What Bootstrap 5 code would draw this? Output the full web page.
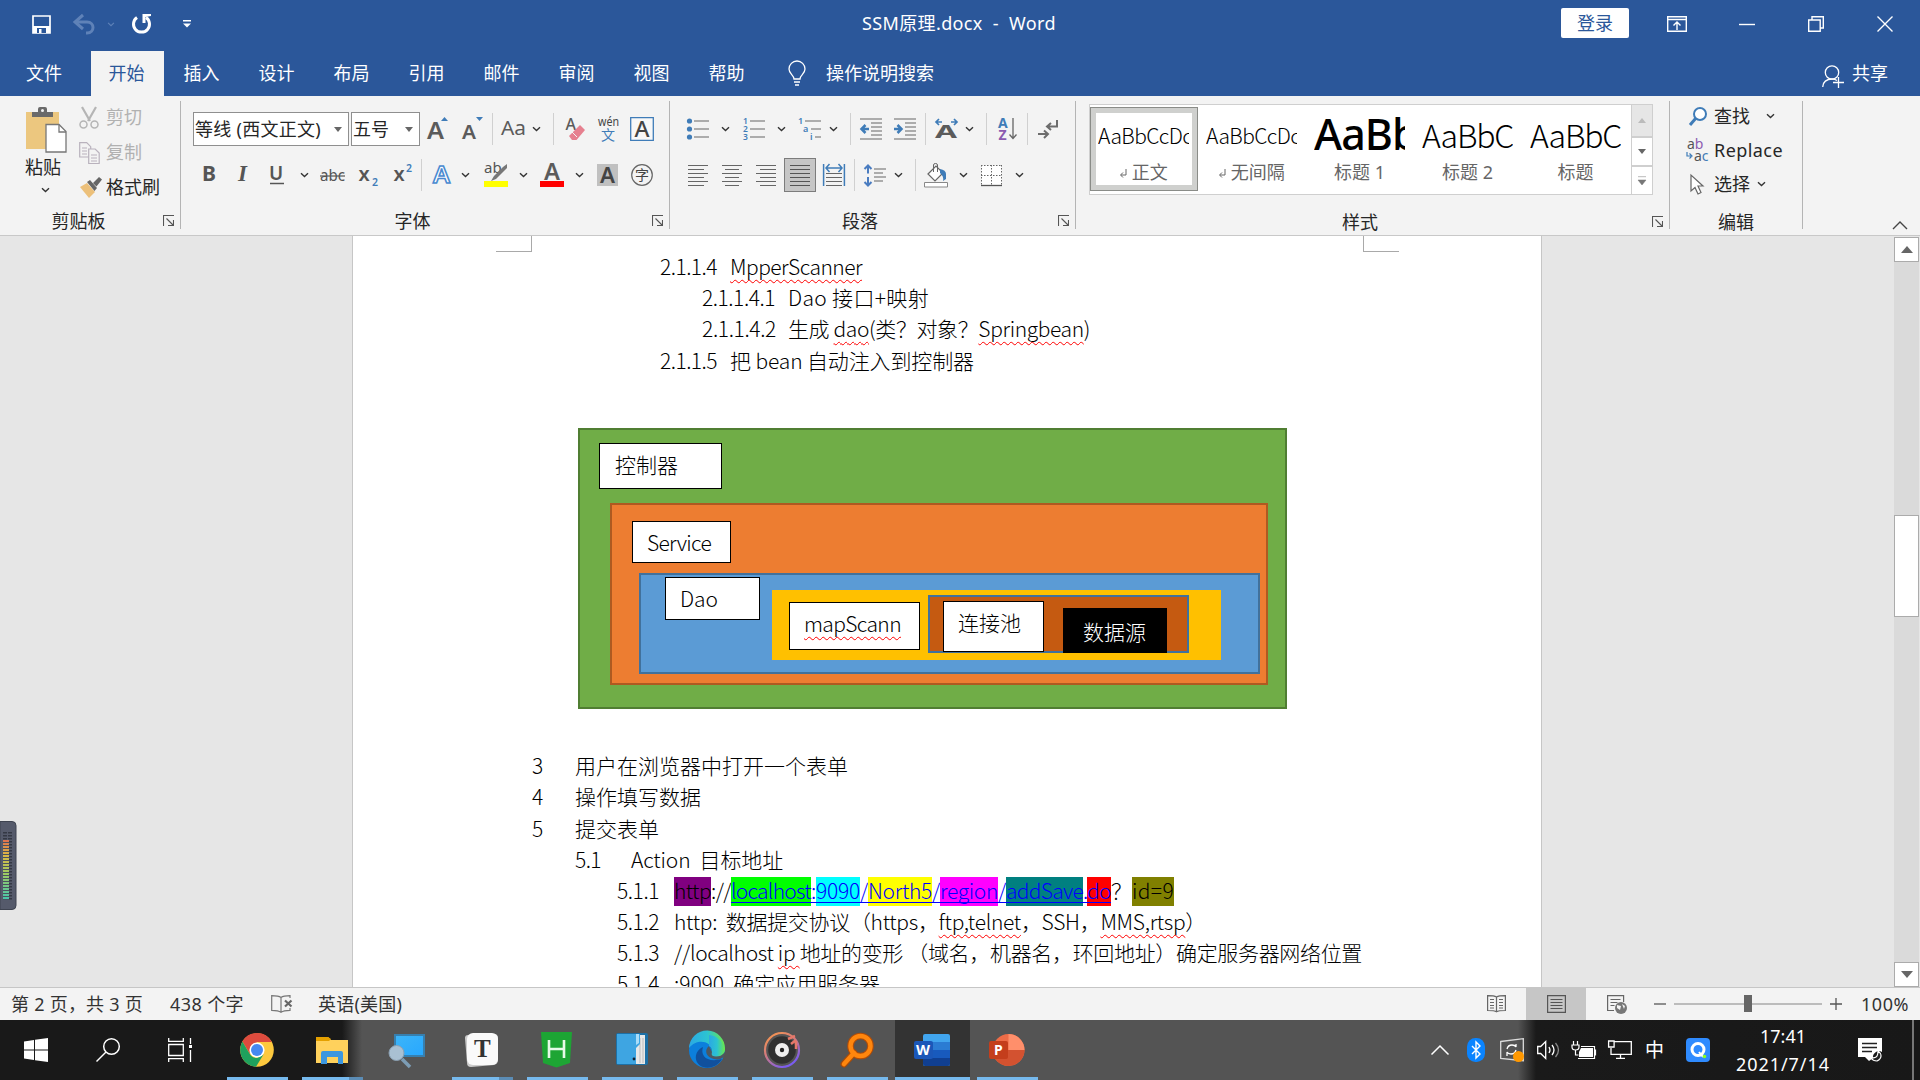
<!DOCTYPE html>
<html lang="zh-CN">
<head>
<meta charset="utf-8">
<title>SSM原理.docx - Word</title>
<link href="https://cdn.jsdelivr.net/npm/bootstrap@5.3.0/dist/css/bootstrap.min.css" rel="stylesheet">
<style>
:root{--word:#2b579a;--pane:#f3f3f3;--ink:#262626;--ico:#5b5b5b;--blu:#3f7cb8}
body{width:1920px;height:1080px;overflow:hidden;font:18px/1.4 "Noto Sans","Noto Sans CJK SC",sans-serif;color:var(--ink);background:#e6e6e6}
svg{display:block;overflow:visible;flex:none}
.nw{white-space:nowrap}
/* title bar and tabs */
.titlebar{height:51px;background:var(--word);color:#fff;padding-left:32px;flex:none}
.qat{width:830px;height:48px;display:grid;grid-template-columns:42px 33px 24px 52px 8px;align-items:center}
.doc-title{width:193px;height:48px;line-height:47px;letter-spacing:-.1px}
.sys{height:47px;display:grid;grid-template-columns:106px 72px 69px 69px 16px;align-items:center;margin-left:506px}
.login{width:68px;height:30px;background:#fff;color:var(--word);border-radius:2px;line-height:30px;text-align:center;margin-top:-1px}
.tabs{height:45px;background:var(--word);color:#fff;flex:none}
.tab{width:75px;text-align:center;line-height:44px}
.tab.file{width:91px;padding-right:3px}
.tab.on{width:73px;background:var(--pane);color:var(--word);padding-right:2px}
.tell{margin-left:24px;width:1034px}
.share-i{margin-top:14px}
/* ribbon */
.ribbon{height:140px;background:var(--pane);border-bottom:1px solid #c8c8c8;flex:none}
.grp{padding-top:13px;display:flex;flex-direction:column}
.vline{width:1px;height:128px;margin-top:5px;background:#b4b4b4;flex:none}
.grp>*{flex:none}
.rrow{height:40px;display:grid;align-items:center}
.rrow+.rrow{margin-top:6px}
.rrow+.gname{margin-top:12px}
.div32{width:1px;height:32px;background:#d0d0d0}
.gname{height:28px;margin-top:11px;padding-right:6px;line-height:28px;text-align:center}
.gname span{flex:1;padding-right:8px}
.clip-body+.gname span{padding-right:6px}
.g-clip{width:180px}.g-font{width:488px}.g-para{width:405px}.g-style{width:593px}.g-edit{width:132px}
.clip-body{height:87px}
.paste{width:79px;padding:0 0 0 26px;margin-top:-2px}
.paste-t{margin:2px 0 0 -1px;line-height:24px}
.paste-c{margin:8px 0 0 15px}
.clip-list{margin-top:-9px}
.clip-list div{height:35px;display:grid;grid-template-columns:27px auto;align-items:center;line-height:35px}
.off{color:#b1b1b1}
.f1{margin-left:12px;grid-template-columns:158px 77px 35px 29px 9px 31px 21px 13px 32px 32px 24px}
.f2{margin-left:22px;grid-template-columns:33px 34px 30px 20px 39px 35px 27px 12px 28px 23px 35px 21px 35px 22px 34px 22px}
.p1{margin-left:17px;grid-template-columns:34px 22px 34px 21px 31px 21px 10px 34px 31px 10px 30px 21px 12px 29px 11px 20px}
.p2{margin-left:18px;grid-template-columns:34px 34px 28px 39px 31px 10px 30px 21px 9px 35px 22px 34px 9px}
.combo{height:34px;background:#fff;border:1px solid #8f8f8f;display:flex;align-items:center;justify-content:space-between;padding:0 6px 0 1px;line-height:32px}
.c-face{width:156px}.c-size{width:69px}
.pressed{width:32px;height:34px;background:#c6c6c6;border:1px solid #7c7c7c;display:flex;align-items:center;justify-content:center}
.gallery{width:564px;height:91px;margin:-5px 0 0 13px;background:#fff;border:1px solid #cfcfcf}
.sty{width:108px;height:84px;margin-top:2px;padding:6px 0 0 8px;color:#666}
.sty.sel{border:1px solid #8a8c88;box-shadow:inset 0 0 0 5px #cfd0ce;padding:5px 0 0 7px}
.sty .smp{width:91px;height:47px;overflow:hidden;color:#000;white-space:nowrap;font-family:"Noto Sans CJK SC",sans-serif;font-weight:300;font-size:21px;line-height:44px;letter-spacing:-.6px}
.sty .smp.h1s{font-family:"Noto Sans",sans-serif;font-size:43px;font-weight:500;letter-spacing:-1px;line-height:42px}
.sty .smp.h2s{font-size:32px;font-weight:300;letter-spacing:-1.2px;line-height:42px}
.sty .cap{width:91px;text-align:center;line-height:25px}
.gbtns{width:22px;margin-left:auto;height:91px;margin-top:-1px;margin-right:-1px}
.gbtns div{height:29px;border:1px solid #cfcfcf;display:flex;align-items:center;justify-content:center;flex:none}
.gbtns div:first-child{height:33px;background:#e6e6e6}
.gallery+.gname{margin-top:13px}
.edit-list{padding-left:15px;height:91px;margin-top:-10px}
.edit-list div{height:34px;display:flex;align-items:center;line-height:34px;flex:none}
.edit-list .lab{width:67px}
.lab.s1{width:52px}.lab.s2{width:43px}
.edit-list .icw{width:29px}
.edit-list+.gname{margin-top:18px;padding:0}
.edit-list+.gname span{padding:0}
.collapse-c{margin:125px 0 0 89px}
/* document */
.work{height:751px;overflow:hidden;flex:none;position:relative}
.page{width:1190px;margin-left:352px;background:#fff;border:solid #c6c6c6;border-width:0 1px;position:relative;font-family:"Noto Sans CJK SC",sans-serif;font-size:21px;font-weight:300;color:#000;padding-top:15px}
.corner{position:absolute;top:0;width:36px;height:16px;border:solid #a9a9a9;border-width:0 1px 1px 0}
.corner.l{left:143px}.corner.r{left:1010px;border-width:0 0 1px 1px}
.ln{height:31.2px;line-height:31.2px;display:flex;white-space:pre}
.n{flex:none}
.a1{padding-left:307px}.a1 .n{width:70px}
.a2{padding-left:349px}.a2 .n{width:86px}
.b0{padding-left:179px}.b0 .n{width:43px}
.b1{padding-left:222px}.b1 .n{width:56px}
.b2{padding-left:264px}.b2 .n{width:57px}
.sq{text-decoration:underline wavy #f00 1.3px;text-underline-offset:4px;text-decoration-skip-ink:none}
.run{display:block;flex:none;height:29px;margin-top:2px;line-height:27px}
.lk{color:#00f;position:relative}
.lk::after{content:"";position:absolute;left:0;right:0;bottom:3px;height:1px;background:#00f}
.k1{background:#800080}.k2{background:#0f0}.k3{background:#0ff}.k4{background:#ff0}.k5{background:#f0f}.k6{background:#008080}.k7{background:red}.k8{background:#808000}
.canvas-d{height:374.4px;position:relative}
.bx{position:absolute;border:2px solid}
.tb{position:absolute;background:#fff;border:1.5px solid #000;white-space:nowrap;line-height:26px}
.d1{left:225px;top:52px;width:709px;height:281px;background:#70ad47;border-color:#507e32}
.d2{left:257px;top:127px;width:658px;height:182px;background:#ed7d31;border-color:#ae5a21}
.d3{left:286px;top:197px;width:621px;height:101px;background:#5b9bd5;border-color:#41719c}
.d4{left:419px;top:214px;width:449px;height:70px;background:#ffc000;border-color:#ffc000}
.d5{left:575px;top:219px;width:261px;height:58px;background:#c55a11;border-color:#41719c}
.t1{left:246px;top:67px;width:123px;height:46px;padding:7px 0 0 15px}
.t2{left:279px;top:145px;width:99px;height:42px;padding:7px 0 0 14px}
.t3{left:312px;top:201px;width:95px;height:43px;padding:7px 0 0 14px}
.t4{left:436px;top:226px;width:131px;height:48px;padding:7px 0 0 14px}
.t5{left:590px;top:225px;width:101px;height:51px;padding:7px 0 0 14px}
.t6{left:710px;top:232px;width:104px;height:45px;padding:9px 0 0 19px;background:#000;color:#fff}
.sbar{position:absolute;right:1px;top:1px;width:25px;height:750px;background:#dadada}
.sbar div{border:1px solid #ababab;background:#fff;height:25px;display:flex;align-items:center;justify-content:center;flex:none}
.sbar .thumb{height:102px;margin:253px 0 auto}
.meter{position:absolute;left:0;top:585px}
/* status bar */
.status{height:33px;background:var(--pane);border-top:1px solid #c6c6c6;flex:none;display:grid;grid-template-columns:159px 101px 47px 1169px 39px 60px 68px 20px 156px 31px auto;align-items:center;padding-left:11px;color:#333;line-height:32px}
.viewon{width:60px;height:32px;background:#c6c6c6;padding:7px 0 0 21px}
.webv{margin-left:21px}
/* taskbar */
.task{height:60px;flex:none;color:#fff;background:linear-gradient(90deg,#191919 0,#191919 342px,#545454 362px,#545454 1518px,#1a1a1a 1536px,#181818 100%)}
.sysb{width:72px;height:60px;display:flex;align-items:center;justify-content:center}
.app{width:75px;height:60px;display:flex;flex-direction:column;align-items:center;justify-content:space-between;padding-top:12px}
.app svg{margin-left:-2px}
.app .bar{width:61px;height:3px;background:#76b9ed}
.app .bar.multi{background:linear-gradient(90deg,#76b9ed 47px,#5b8cb5 47px)}
.app.act{background:#333}
.app.act .bar{width:75px}
.tray{display:grid;grid-template-columns:36px 33px 37px 35px 36px 38px 40px 43px 129px 54px 3px;align-items:center;margin-left:386px}
.clock{text-align:center;line-height:28px;width:108px;letter-spacing:-.1px}
.ime{font-size:19px;line-height:24px;margin-left:-1px}
.peek{width:2px;height:60px;background:#777}
</style>
</head>
<body class="d-flex flex-column">
<svg width="0" height="0" class="position-absolute"><defs>
<symbol id="cv" viewBox="0 0 9 6"><path d="M1 1.2 4.5 4.5 8 1.2" fill="none" stroke="#333" stroke-width="1.4"/></symbol>
<symbol id="tri" viewBox="0 0 8 5"><path d="M0 0h8L4 5z" fill="#666"/></symbol>
<symbol id="la" viewBox="0 0 11 11"><path d="M.5 11V.5H11M3.5 3.5 10 10M10.5 5v5.5H5" fill="none" stroke="#555" stroke-width="1.1"/></symbol>
</defs></svg>

<header class="titlebar d-flex align-items-start">
  <div class="qat">
    <svg width="19" height="19" viewBox="0 0 19 19"><path d="M1 1h17v17H1z" fill="none" stroke="#fff" stroke-width="1.7"/><path d="M1 11h17v7H1z" fill="#fff"/><path d="M5 13h9v5H5z" fill="#2b579a"/><path d="M7 14h2.500v4H7z" fill="#fff"/></svg>
    <svg width="21" height="19" viewBox="0 0 21 19"><path d="M2 7h11c8 0 8 11 0 11h-1" fill="none" stroke="#5f82b8" stroke-width="3"/><path d="M9 0 1 7l8 7" fill="none" stroke="#5f82b8" stroke-width="3"/></svg>
    <svg width="8" height="5" viewBox="0 0 9 6"><path d="M1 1l3.500 3.500L8 1" fill="none" stroke="#5f82b8" stroke-width="1.300"/></svg>
    <svg width="21" height="20" viewBox="0 0 21 20"><path d="M6 3.500A8 8 0 1 0 15 3.500" fill="none" stroke="#fff" stroke-width="3"/><path d="M11.500 0H20v2l-5.500 1v6h-3z" fill="#fff"/></svg>
    <svg width="8" height="8" viewBox="0 0 8 8"><path d="M0 0h8v1.500H0zM0 3.500h8L4 7.500z" fill="#fff"/></svg>
  </div>
  <div class="doc-title nw text-center"><span data-w="194">SSM原理.docx&nbsp; -&nbsp; Word</span></div>
  <div class="sys">
    <div class="login">登录</div>
    <svg width="20" height="16" viewBox="0 0 20 16"><path d="M.7.700h18.600v14.600H.7zM.7 3.500h18.600M10 14V6M6.500 9.500 10 6l3.500 3.500" fill="none" stroke="#fff" stroke-width="1.400"/></svg>
    <svg width="16" height="16" viewBox="0 0 16 16"><path d="M0 8.500h16" stroke="#fff" stroke-width="1.400"/></svg>
    <svg width="16" height="16" viewBox="0 0 16 16"><path d="M.7 4h11.500v11.300H.7zM4 4V.7h11.300V12h-3" fill="none" stroke="#fff" stroke-width="1.400"/></svg>
    <svg width="16" height="16" viewBox="0 0 16 16"><path d="M.5.500l15 15M15.500.500l-15 15" stroke="#fff" stroke-width="1.400"/></svg>
  </div>
</header>
<nav class="tabs d-flex">
  <div class="tab file">文件</div><div class="tab on">开始</div><div class="tab">插入</div><div class="tab">设计</div><div class="tab">布局</div><div class="tab">引用</div><div class="tab">邮件</div><div class="tab">审阅</div><div class="tab">视图</div><div class="tab">帮助</div>
  <div class="tell d-flex align-items-center"><svg width="18" height="24" viewBox="0 0 18 24"><path d="M6 17c0-4-5-5-5-10a8 8 0 0 1 16 0c0 5-5 6-5 10zM6 20h6M7 23h4" fill="none" stroke="#fff" stroke-width="1.300"/></svg><span class="ms-3 ps-1 nw">操作说明搜索</span></div>
  <svg class="share-i" width="22" height="23" viewBox="0 0 22 23"><circle cx="10" cy="7.500" r="6.700" fill="none" stroke="#fff" stroke-width="1.300"/><path d="M.7 22c0-5 4-8 9.300-8q3 0 5 1.500M16.500 12v11M11 17.500h11" fill="none" stroke="#fff" stroke-width="1.300"/></svg>
  <span class="nw ps-2 lh-lg mt-1">共享</span>
</nav>

<section class="ribbon d-flex">
  <div class="grp g-clip">
    <div class="clip-body d-flex">
      <div class="paste">
        <svg width="41" height="46" viewBox="0 0 41 46"><path d="M0 5h33v37H0z" fill="#ecc77f"/><path d="M6 10V5h6V2q0-2 2-2h5q2 0 2 2v3h6v5z" fill="#6a6a6a"/><circle cx="16.500" cy="3.500" r="1.500" fill="#f3f3f3"/><path d="M20 17.500h13l7 7V45H20z" fill="#fff" stroke="#777" stroke-width="1.300"/><path d="M33 17.500V25h7" fill="none" stroke="#777" stroke-width="1.300"/></svg>
        <div class="paste-t nw">粘贴</div>
        <svg class="paste-c" width="9" height="6"><use href="#cv"/></svg>
      </div>
      <div class="clip-list">
        <div class="off"><svg width="20" height="22" viewBox="0 0 20 22"><path d="M3 0l8 14M17 0 9 14" stroke="#b5b5b5" stroke-width="2.200"/><circle cx="4.500" cy="17.500" r="3.500" fill="none" stroke="#b5b5b5" stroke-width="1.500"/><circle cx="15.500" cy="17.500" r="3.500" fill="none" stroke="#b5b5b5" stroke-width="1.500"/></svg>剪切</div>
        <div class="off"><svg width="21" height="22" viewBox="0 0 21 22"><path d="M.7.700h7l4 4V15H.7zM3 6h5M3 9h5M3 12h5" fill="none" stroke="#b9b2bd" stroke-width="1.200"/><path d="M9.700 7h6.500l4 4v10.500H9.700zM12 13h6M12 16h6M12 19h6" fill="#f3f3f3" stroke="#b9b2bd" stroke-width="1.200"/></svg>复制</div>
        <div><svg width="23" height="21" viewBox="0 0 23 21"><path d="M1 10l7-4 8 9-6 6z" fill="#ecc07a"/><path d="M8 5l3-2 7 8-2.500 3zM14 6l6-6 3 2.500-5.500 7z" fill="#666"/></svg>格式刷</div>
      </div>
    </div>
    <div class="gname d-flex"><span>剪贴板</span><svg width="11" height="11" class="mt-2"><use href="#la"/></svg></div>
  </div>
  <div class="vline"></div>
  <div class="grp g-font">
    <div class="rrow f1">
      <div class="combo c-face nw"><span data-w="126">等线 (西文正文)</span><svg width="8" height="5"><use href="#tri"/></svg></div>
      <div class="combo c-size nw">五号<svg width="8" height="5"><use href="#tri"/></svg></div>
      <svg width="20" height="24" viewBox="0 0 20 24"><text x="-1" y="22" font-size="24" font-weight="600" fill="#5b5b5b" textLength="17" lengthAdjust="spacingAndGlyphs">A</text><path d="M13 4l3.500-4L20 4z" fill="#3f7cb8"/></svg>
      <svg width="20" height="24" viewBox="0 0 20 24"><text x="-1" y="22" font-size="20" font-weight="600" fill="#5b5b5b" textLength="14" lengthAdjust="spacingAndGlyphs">A</text><path d="M13 0h7l-3.500 4z" fill="#3f7cb8"/></svg>
      <div class="div32"></div>
      <svg width="25" height="24" viewBox="0 0 25 24"><text x="0" y="18" font-size="20" fill="#5b5b5b" textLength="25" lengthAdjust="spacingAndGlyphs">Aa</text></svg>
      <svg width="9" height="6"><use href="#cv"/></svg>
      <div class="div32"></div>
      <svg width="20" height="23" viewBox="0 0 20 23"><text x="-.5" y="12" font-size="16" fill="#5b5b5b" font-weight="500">A</text><path d="M14 7l5 5-8.500 10H6l-3-4z" fill="#e6808f"/><path d="M6 14l5 5" stroke="#f3f3f3"/></svg>
      <svg width="21" height="24" viewBox="0 0 21 24"><text x="0" y="9" font-size="13" fill="#444" textLength="21" lengthAdjust="spacingAndGlyphs">wén</text><text x="3" y="23" font-size="14" fill="#3f7cb8">文</text></svg>
      <svg width="24" height="24" viewBox="0 0 24 24"><path d="M.7.700h22.600v22.600H.7z" fill="#f8f8f8" stroke="#3f7cb8" stroke-width="1.300"/><text x="4.500" y="20" font-size="22" fill="#444" font-weight="500" textLength="15" lengthAdjust="spacingAndGlyphs">A</text></svg>
    </div>
    <div class="rrow f2">
      <svg width="13" height="24"><text x="-1" y="18" font-size="21" font-weight="700" fill="#555">B</text></svg>
      <svg width="13" height="24"><text x="2" y="18" font-size="23" font-style="italic" font-weight="600" font-family="Liberation Serif" fill="#555">I</text></svg>
      <svg width="14" height="24"><text x="-1" y="17" font-size="19" font-weight="600" fill="#555">U</text><path d="M0 20.500h14" stroke="#555" stroke-width="1.500"/></svg>
      <svg width="9" height="6"><use href="#cv"/></svg>
      <svg width="26" height="24"><text x="0" y="18" font-size="16" fill="#555" textLength="25" lengthAdjust="spacingAndGlyphs">abc</text><path d="M0 13h25" stroke="#555" stroke-width="1.200"/></svg>
      <svg width="20" height="24"><text x="-.5" y="18" font-size="20" font-weight="600" fill="#555">x</text><text x="13" y="23" font-size="10.500" font-weight="600" fill="#3f7cb8">2</text></svg>
      <svg width="20" height="24"><text x="-.5" y="18" font-size="20" font-weight="600" fill="#555">x</text><text x="12" y="9" font-size="10.500" font-weight="600" fill="#3f7cb8">2</text></svg>
      <div class="div32"></div>
      <svg width="18" height="24"><text x="0" y="20" font-size="24" fill="#fff" stroke="#4a8ad0" stroke-width="1.500" font-weight="600" textLength="17" lengthAdjust="spacingAndGlyphs">A</text></svg>
      <svg width="9" height="6"><use href="#cv"/></svg>
      <svg width="24" height="26"><path d="M0 19h24v6H0z" fill="#ff0"/><text x="0" y="11" font-size="15" fill="#555">ab</text><path d="M19 5l4-3v4L12 17l-5 2 3-5z" fill="#777"/></svg>
      <svg width="9" height="6"><use href="#cv"/></svg>
      <svg width="24" height="26"><path d="M0 19h24v6H0z" fill="red"/><text x="4" y="18" font-size="23" font-weight="600" fill="#5b5b5b" textLength="16" lengthAdjust="spacingAndGlyphs">A</text></svg>
      <svg width="9" height="6"><use href="#cv"/></svg>
      <svg width="21" height="22"><path d="M0 0h21v22H0z" fill="#c0c0c0"/><text x="3" y="19" font-size="22" font-weight="600" fill="#444" textLength="15" lengthAdjust="spacingAndGlyphs">A</text></svg>
      <svg width="22" height="22"><circle cx="11" cy="11" r="10.300" fill="none" stroke="#666" stroke-width="1.200"/><text x="4" y="16" font-size="14" fill="#444">字</text></svg>
    </div>
    <div class="gname d-flex"><span>字体</span><svg width="11" height="11" class="mt-2"><use href="#la"/></svg></div>
  </div>
  <div class="vline"></div>
  <div class="grp g-para">
    <div class="rrow p1">
      <svg width="22" height="22"><g fill="#3f7cb8"><circle cx="2.500" cy="3" r="2.600"/><circle cx="2.500" cy="11" r="2.600"/><circle cx="2.500" cy="19" r="2.600"/></g><path d="M7 3h15M7 11h15M7 19h15" stroke="#666" stroke-width="1.200"/></svg>
      <svg width="9" height="6"><use href="#cv"/></svg>
      <svg width="22" height="22"><g font-size="8.500" font-weight="600" fill="#3f7cb8"><text y="6">1</text><text y="14">2</text><text y="22">3</text></g><path d="M7 3h15M7 11h15M7 19h15" stroke="#666" stroke-width="1.200"/></svg>
      <svg width="9" height="6"><use href="#cv"/></svg>
      <svg width="23" height="22"><g font-size="9" font-weight="600" fill="#3f7cb8"><text y="6">1</text><text x="5" y="13.500">a</text><text x="12" y="22">i</text></g><path d="M7 3h16M13 11h10M17 19h6" stroke="#666" stroke-width="1.200"/></svg>
      <svg width="9" height="6"><use href="#cv"/></svg>
      <div class="div32"></div>
      <svg width="22" height="22"><path d="M0 1h22M11 5h11M11 9h11M11 13h11M11 17h11M0 21h22" stroke="#666" stroke-width="1.200"/><path d="M9 11H2M5.500 7 1.500 11l4 4" stroke="#3f7cb8" stroke-width="2.500" fill="none"/></svg>
      <svg width="22" height="22"><path d="M0 1h22M11 5h11M11 9h11M11 13h11M11 17h11M0 21h22" stroke="#666" stroke-width="1.200"/><path d="M0 11h7M3.500 7l4 4-4 4" stroke="#3f7cb8" stroke-width="2.500" fill="none"/></svg>
      <div class="div32"></div>
      <svg width="23" height="20"><text x="0" y="19" font-size="17" font-weight="700" fill="#5b5b5b" textLength="22" lengthAdjust="spacingAndGlyphs">A</text><path d="M7 3H1M4 0 1 3l3 3M16 3h6M19 0l3 3-3 3" stroke="#3f7cb8" stroke-width="1.700" fill="none"/></svg>
      <svg width="9" height="6"><use href="#cv"/></svg>
      <div class="div32"></div>
      <svg width="19" height="24"><text x="0" y="11" font-size="14" font-weight="700" fill="#3f7cb8">A</text><text x="0.500" y="23" font-size="14" font-weight="700" fill="#8b5bb0">Z</text><path d="M15 1v20M11.500 17.500 15 21.500l3.500-4" stroke="#666" stroke-width="1.300" fill="none"/></svg>
      <div class="div32"></div>
      <svg width="20" height="19"><path d="M19 0v6.500h-9M13 3l-4 3.500 4 3.500M0 14h9M6 10.500l4 3.500-4 4" stroke="#6c6c6c" stroke-width="2" fill="none"/></svg>
    </div>
    <div class="rrow p2">
      <svg width="20" height="21"><path d="M0 .5h20M0 4.500h16M0 8.500h20M0 12.500h16M0 16.500h20M0 20.500h16" stroke="#666" stroke-width="1.200"/></svg>
      <svg width="20" height="21"><path d="M0 .5h20M3 4.500h14M0 8.500h20M3 12.500h14M0 16.500h20M3 20.500h14" stroke="#666" stroke-width="1.200"/></svg>
      <svg width="20" height="21"><path d="M0 .5h20M4 4.500h16M0 8.500h20M4 12.500h16M0 16.500h20M4 20.500h16" stroke="#666" stroke-width="1.200"/></svg>
      <div class="pressed"><svg width="20" height="21"><path d="M0 .5h20M0 4.500h20M0 8.500h20M0 12.500h20M0 16.500h20M0 20.500h20" stroke="#555" stroke-width="1.200"/></svg></div>
      <svg width="22" height="22"><path d="M.6 0v22M21.400 0v22M3 4h16M6.500 0 3 4l3.500 4M15.500 0 19 4l-3.500 4" stroke="#3f7cb8" stroke-width="1.500" fill="none"/><path d="M3 9.500h16M3 13.500h16M3 17.500h16M3 21.500h16" stroke="#666" stroke-width="1.200"/></svg>
      <div class="div32"></div>
      <svg width="22" height="23"><path d="M4 1v8.500M.5 5 4 1.500 7.500 5M4 13v8.500M.5 18 4 21.500 7.500 18" stroke="#4a7cc0" stroke-width="2" fill="none"/><path d="M10 5h12M10 9h9M10 13h12M10 17h9" stroke="#666" stroke-width="1.200"/></svg>
      <svg width="9" height="6"><use href="#cv"/></svg>
      <div class="div32"></div>
      <svg width="24" height="25"><path d="M.5 19.500h23v4.500H.5z" fill="#fff" stroke="#888"/><path d="M4 11l8-8 7 7-8 8z" fill="#fff" stroke="#666" stroke-width="1.200"/><path d="M9.500 9V2q0-1.500 2-1.500t2 1.500v7" fill="none" stroke="#666"/><path d="M16 6q6 1 6 5v5l-3 2q1-5-3-8z" fill="#3f7cb8"/></svg>
      <svg width="9" height="6"><use href="#cv"/></svg>
      <svg width="21" height="21"><path d="M.5.500h20v20H.5z" fill="#fff"/><path d="M0 .5h21M0 10.500h21M.5 0v21M10.500 0v21M20.500 0v21" stroke="#666" stroke-dasharray="1.500 1.500"/><path d="M0 20.500h21" stroke="#555" stroke-width="1.300"/></svg>
      <svg width="9" height="6"><use href="#cv"/></svg>
    </div>
    <div class="gname d-flex"><span>段落</span><svg width="11" height="11" class="mt-2"><use href="#la"/></svg></div>
  </div>
  <div class="vline"></div>
  <div class="grp g-style">
    <div class="gallery d-flex">
      <div class="sty sel"><div class="smp">AaBbCcDc</div><div class="cap"><svg class="d-inline" width="8" height="10"><path d="M7 0v6H2M4 3.500 1.500 6 4 8.500" fill="none" stroke="#666"/></svg> 正文</div></div>
      <div class="sty"><div class="smp">AaBbCcDc</div><div class="cap"><svg class="d-inline" width="8" height="10"><path d="M7 0v6H2M4 3.500 1.500 6 4 8.500" fill="none" stroke="#666"/></svg> 无间隔</div></div>
      <div class="sty"><div class="smp h1s">AaBb</div><div class="cap">标题 1</div></div>
      <div class="sty"><div class="smp h2s">AaBbC</div><div class="cap">标题 2</div></div>
      <div class="sty"><div class="smp h2s">AaBbC</div><div class="cap">标题</div></div>
      <div class="gbtns"><div><svg width="8" height="5"><path d="M0 5h8L4 0z" fill="#bbb"/></svg></div><div><svg width="8" height="5"><use href="#tri"/></svg></div><div><svg width="8" height="9"><path d="M0 .7h8M0 4h8L4 9z" fill="#777" stroke="#777" stroke-width=".5"/></svg></div></div>
    </div>
    <div class="gname d-flex"><span>样式</span><svg width="11" height="11" class="mt-2"><use href="#la"/></svg></div>
  </div>
  <div class="vline"></div>
  <div class="grp g-edit">
    <div class="edit-list">
      <div><span class="icw ps-1"><svg width="18" height="19"><circle cx="11" cy="7" r="6" fill="#fff" stroke="#3f7cb8" stroke-width="2"/><path d="M7 11 1 18" stroke="#3f7cb8" stroke-width="3"/></svg></span><span class="lab s1">查找</span><svg width="9" height="6"><use href="#cv"/></svg></div>
      <div><span class="icw"><svg width="22" height="23"><text x="2" y="10" font-size="14" fill="#555">a<tspan fill="#8b5bb0">b</tspan></text><text x="9" y="22" font-size="14" fill="#555">a<tspan fill="#3f7cb8">c</tspan></text><path d="M2 13v4h4M4.500 14.500 7 17l-2.500 2.500" fill="none" stroke="#3f7cb8" stroke-width="1.200"/></svg></span><span class="lab"><span data-w="69">Replace</span></span></div>
      <div><span class="icw ps-1"><svg width="13" height="21"><path d="M2 1v16l4-3.500L9 20l3-1.500-3-6.500h5z" fill="#fff" stroke="#666" stroke-width="1.200"/></svg></span><span class="lab s2">选择</span><svg width="9" height="6"><use href="#cv"/></svg></div>
    </div>
    <div class="gname d-flex"><span>编辑</span></div>
  </div>
  <div class="vline"></div>
  <svg class="collapse-c" width="16" height="9"><path d="M1 8l7-7 7 7" fill="none" stroke="#444" stroke-width="1.400"/></svg>
</section>

<main class="work">
  <div class="page">
    <i class="corner l"></i><i class="corner r"></i>
    <div class="ln a1"><span class="n"><span data-w="57">2.1.1.4</span></span><span data-w="132" class="sq">MpperScanner</span></div>
    <div class="ln a2"><span class="n"><span data-w="73">2.1.1.4.1</span></span><span data-w="141">Dao 接口+映射</span></div>
    <div class="ln a2"><span class="n"><span data-w="74">2.1.1.4.2</span></span><span data-w="302">生成 <span class="sq">dao</span>(类？对象？<span class="sq">Springbean</span>)</span></div>
    <div class="ln a1"><span class="n"><span data-w="57">2.1.1.5</span></span><span data-w="244">把 bean 自动注入到控制器</span></div>
    <div class="canvas-d">
      <div class="bx d1"></div><div class="bx d2"></div><div class="bx d3"></div><div class="bx d4"></div><div class="bx d5"></div>
      <div class="tb t1">控制器</div>
      <div class="tb t2"><span data-w="64">Service</span></div>
      <div class="tb t3"><span data-w="38">Dao</span></div>
      <div class="tb t4"><span data-w="97" class="sq">mapScann</span></div>
      <div class="tb t5">连接池</div>
      <div class="tb t6">数据源</div>
    </div>
    <div class="ln b0"><span class="n">3</span><span>用户在浏览器中打开一个表单</span></div>
    <div class="ln b0"><span class="n">4</span><span>操作填写数据</span></div>
    <div class="ln b0"><span class="n">5</span><span>提交表单</span></div>
    <div class="ln b1"><span class="n"><span data-w="26">5.1</span></span><span data-w="152">Action  目标地址</span></div>
    <div class="ln b2"><span class="n"><span data-w="42">5.1.1</span></span><span class="run k1" data-w="37">http</span><span class="run" data-w="20">://</span><span class="run lk k2" data-w="80">localhost</span><span class="run lk" data-w="5">:</span><span class="run lk k3" data-w="44">9090</span><span class="run lk" data-w="8">/</span><span class="run lk k4" data-w="64">North5</span><span class="run lk" data-w="8">/</span><span class="run lk k5" data-w="58">region</span><span class="run lk" data-w="8">/</span><span class="run lk k6" data-w="77">addSave</span><span class="run lk" data-w="4">.</span><span class="run lk k7" data-w="24">do</span><span class="run" data-w="21">？</span><span class="run k8" data-w="42">id=9</span></div>
    <div class="ln b2"><span class="n"><span data-w="42">5.1.2</span></span><span data-w="532">http:  数据提交协议（https，<span class="sq">ftp,telnet</span>，SSH，<span class="sq">MMS,rtsp</span>）</span></div>
    <div class="ln b2"><span class="n"><span data-w="42">5.1.3</span></span><span data-w="688">//localhost <span class="sq">ip </span>地址的变形 （域名，机器名，环回地址）确定服务器网络位置</span></div>
    <div class="ln b2"><span class="n"><span data-w="42">5.1.4</span></span><span data-w="206">:9090  确定应用服务器</span></div>
  </div>
  <svg class="meter" width="17" height="89" viewBox="0 0 17 89"><path d="M0 .5h12q4 0 4 4v80q0 4-4 4H0z" fill="#555a6b" stroke="#3e4350"/><path d="M5 11v8M10 11v68" stroke="#343844" stroke-width="4" stroke-dasharray="1.500 1.500"/><defs><linearGradient id="mg" x2="0" y2="1"><stop stop-color="#e07050"/><stop offset=".25" stop-color="#dcb845"/><stop offset=".55" stop-color="#a0cc60"/><stop offset="1" stop-color="#45c5ad"/></linearGradient></defs><path d="M3 19h6v60H3z" fill="url(#mg)"/><path d="M6 21v59" stroke="#4c5160" stroke-width="6" stroke-dasharray="1 2"/></svg>
  <div class="sbar d-flex flex-column"><div><svg width="12" height="7"><path d="M0 7h12L6 0z" fill="#666"/></svg></div><div class="thumb"></div><div><svg width="12" height="7"><path d="M0 0h12L6 7z" fill="#666"/></svg></div></div>
</main>

<footer class="status nw">
  <span data-w="132">第 2 页，共 3 页</span><span data-w="74">438 个字</span>
  <svg width="21" height="18"><path d="M10 2.500C8 1 4 .7.700.700v14.600c3 0 7 .2 9.300 2 2-1.500 5-2 9-2V13M10 2.500V17M10 2.500C12 1 15 .7 19 .7V3" fill="none" stroke="#777" stroke-width="1.200"/><path d="M14 5.500l6.500 6M20.500 5.500l-6.500 6" stroke="#666" stroke-width="2.200"/></svg>
  <span data-w="84">英语(美国)</span>
  <svg width="19" height="18"><path d="M9.500 2C7 .6 3 .7.600.700v14.800c3 0 7 0 8.900 1.300 2-1.300 6-1.300 8.900-1.300V.7C16 .7 12 .6 9.500 2zV17M3 4.500h4M3 7.500h4M3 10.500h4M3 13h4M12 4.500h4M12 7.500h4M12 10.500h4M12 13h4" fill="none" stroke="#666" stroke-width="1.200"/></svg>
  <div class="viewon"><svg width="19" height="18"><path d="M.6.600h17.800v16.800H.6zM3.500 4.500h12M3.500 7.500h12M3.500 10.500h12M3.500 13.500h12" fill="none" stroke="#555" stroke-width="1.200"/></svg></div>
  <svg class="webv" width="20" height="19"><path d="M7 15.500H.6V.6h16V7M3.500 4.500h10M3.500 7.500h7M3.500 10.500h4" fill="none" stroke="#666" stroke-width="1.200"/><circle cx="14" cy="13" r="6" fill="#777"/><path d="M10 10l4 1-1 4-3-2zM15 9l3 2-1 3z" fill="#f3f3f3"/></svg>
  <svg width="12" height="12"><path d="M0 6h12" stroke="#555" stroke-width="1.300"/></svg>
  <svg width="148" height="18"><path d="M0 9h148" stroke="#aaa" stroke-width="1.600"/><path d="M70 0h8v17h-8z" fill="#666"/></svg>
  <svg width="12" height="12"><path d="M0 6h12M6 0v12" stroke="#555" stroke-width="1.300"/></svg>
  <span><span data-w="48">100%</span></span>
</footer>

<div class="task d-flex">
  <div class="sysb"><svg width="24" height="24"><path d="M0 3.500 10 2v9.500H0zM11 1.800 24 0v11.500H11zM0 12.500h10V22L0 20.500zM11 12.500h13V24l-13-1.800z" fill="#fff"/></svg></div>
  <div class="sysb"><svg width="24" height="24"><circle cx="15.500" cy="8.500" r="7.800" fill="none" stroke="#fff" stroke-width="1.500"/><path d="M10 14 .5 23.500" stroke="#fff" stroke-width="1.500"/></svg></div>
  <div class="sysb"><svg width="24" height="24"><path d="M.7 6.500h14.600v11H.7zM.7 0v3.300h14.600V0M.7 24v-3.300h14.600V24M22.500 0v6M22.500 12v12" fill="none" stroke="#fff" stroke-width="1.300"/><path d="M21 7h3v3h-3z" fill="#fff"/></svg></div>
  <div class="ms-1 app"><svg width="34" height="36" viewBox="0 -1 34 36"><circle cx="17" cy="17" r="16.800" fill="#fdc93e"/><path d="M17 9h14.800A16.800 16.800 0 0 0 2.400 8.500L10 21z" fill="#dd4b3e"/><path d="M2.400 8.600A16.800 16.800 0 0 0 16 33.800L23.500 21.500 17 25q-5 0-7.500-4.500z" fill="#1fa15d"/><circle cx="17" cy="17" r="7.600" fill="#fff"/><circle cx="17" cy="17" r="6" fill="#4688f1"/></svg><div class="bar"></div></div>
  <div class="app"><svg width="32" height="36"><path d="M0 5h12l3 3h17v23H0z" fill="#ffd15c"/><path d="M0 5h12l3 2-2 2H0z" fill="#e4a000"/><path d="M5 32V21q0-2 2-2h18q2 0 2 2v11h-5v-7H11v7z" fill="#3c97e0"/></svg><div class="bar multi"></div></div>
  <div class="app"><svg width="36" height="36"><defs><linearGradient id="b1" x2="1" y2="1"><stop stop-color="#3cb4f8"/><stop offset="1" stop-color="#28a8ff"/></linearGradient></defs><path d="M5 2h31v23H5z" fill="#377fae"/><path d="M7 4h27v19H7z" fill="url(#b1)"/><circle cx="7.500" cy="21" r="7.500" fill="#a9c0d2" stroke="#8ba0b2"/><path d="M13 27l8 8" stroke="#7d9db5" stroke-width="3.500"/></svg></div>
  <div class="app"><svg width="36" height="36"><path d="M1 6q0-3 3-3l26-1q4 0 4 4v22q0 4-4 5L7 35q-4 0-4-4z" fill="#ccc"/><rect x="3" y="1" width="31" height="32" rx="6" fill="#fafafa"/><text x="10" y="25" font-size="25" font-weight="700" font-family="Liberation Serif" fill="#333">T</text></svg><div class="bar multi"></div></div>
  <div class="app"><svg width="31" height="36"><path d="M0 0h31l-2 31-13.500 4.500L2 31z" fill="#1da534"/><path d="M8 8v18M23 8v18M8 17h15" stroke="#e6fae8" stroke-width="2.600"/></svg><div class="bar"></div></div>
  <div class="app"><svg width="32" height="36"><rect y="1" width="32" height="32" rx="2" fill="#1d70a6"/><path d="M20 3h9v29h-9z" fill="#e8e8e8"/><path d="M24 6v25M27 6v25" stroke="#bbb"/><path d="M1 2h23v10l-4 4v16H1z" fill="#3ea5e2"/><path d="M20 2h3v9l-3 2z" fill="#aadcf8"/><circle cx="18" cy="27" r="1.400" fill="#123"/></svg><div class="bar"></div></div>
  <div class="app"><svg width="36" height="36"><defs><linearGradient id="e1"><stop stop-color="#2ba8e4"/><stop offset=".5" stop-color="#2cc3d2"/><stop offset="1" stop-color="#6be84a"/></linearGradient></defs><circle cx="18" cy="18" r="18" fill="#0c7fdc"/><path d="M0 16A18 18 0 0 1 36 17c0 7-7 9-12 7-3-1-1-3-1-6C22 9 8 6 0 16z" fill="url(#e1)"/><path d="M14 15c-3 9 4 16 19 12-5 8-13 10-19 8C4 31 5 19 14 15z" fill="#10509d"/><path d="M20 14c-4 3-4 9 2 12 4 2 9 2 12-.5q1 0 .5 2L36 27V20q-5 6-12 4-2-1-1-4z" fill="#545454" opacity=".9"/><path d="M20 14q5 2 3 7 0 3 3 3 8 1 10-7A18 18 0 0 0 20 3z" fill="url(#e1)"/></svg><div class="bar"></div></div>
  <div class="app"><svg width="36" height="36"><defs><linearGradient id="m1" x2=".6" y2="1"><stop stop-color="#ff9a45"/><stop offset=".5" stop-color="#d07a80"/><stop offset="1" stop-color="#7a5cf0"/></linearGradient></defs><circle cx="18" cy="18" r="17" fill="none" stroke="url(#m1)" stroke-width="2.200"/><circle cx="18" cy="18" r="13.800" fill="#303030"/><circle cx="18" cy="18" r="7" fill="#eee"/><circle cx="18" cy="18" r="2.200" fill="#222"/><path d="M24 7l7-3M32 9v8M27 12l5-4" stroke="#e6786a" stroke-width="2.500"/></svg><div class="bar"></div></div>
  <div class="app"><svg width="34" height="36"><path d="M14 21 4 32" stroke="#a94b08" stroke-width="7" stroke-linecap="round"/><circle cx="20.500" cy="14" r="10" fill="none" stroke="#b04c08" stroke-width="6.600"/><circle cx="20.500" cy="14" r="10" fill="none" stroke="#ff860d" stroke-width="4.500"/><path d="M14 21 4 32" stroke="#ff860d" stroke-width="4.500" stroke-linecap="round"/></svg><div class="bar"></div></div>
  <div class="app act"><svg width="36" height="36"><rect x="9" y="2" width="27" height="32" rx="2" fill="#41a5ee"/><path d="M9 10h27v8H9z" fill="#2b7cd3"/><path d="M9 18h27v8H9z" fill="#185abd"/><path d="M9 26h27v6q0 2-2 2H11q-2 0-2-2z" fill="#103f91"/><rect y="9" width="19" height="18" rx="2" fill="#1b57b8"/><text x="2" y="23" font-size="14" font-weight="700" fill="#fff" textLength="14" lengthAdjust="spacingAndGlyphs">W</text></svg><div class="bar"></div></div>
  <div class="app"><svg width="36" height="36"><circle cx="19.500" cy="18" r="16" fill="#ed6c47"/><path d="M19.500 2a16 16 0 0 1 16 16h-16z" fill="#ff8f6b"/><path d="M35.500 18a16 16 0 0 1-32 0z" fill="#d35230"/><rect y="9" width="19" height="18" rx="2" fill="#c43e1c"/><text x="5" y="23" font-size="14" font-weight="700" fill="#fff">P</text></svg><div class="bar"></div></div>
  <div class="tray">
    <svg width="18" height="10"><path d="M.5 9.500 9 1l8.500 8.500" fill="none" stroke="#fff" stroke-width="1.500"/></svg>
    <svg width="18" height="24"><rect width="18" height="24" rx="8.500" fill="#0a84ff"/><path d="M5 8l8 8-4 4V4l4 4-8 8" fill="none" stroke="#fff" stroke-width="1.400"/></svg>
    <svg width="24" height="24"><path d="M.7 3.500 23.300.7v22L.7 20.500z" fill="none" stroke="#ddd" stroke-width="1.300"/><path d="M7 11q1-4 5-4 3 0 4 2V6M16 12q-1 4-5 4-3 0-4-2v4" fill="none" stroke="#fff" stroke-width="1.300"/><circle cx="18.500" cy="18.500" r="5.500" fill="#ff9800"/></svg>
    <svg width="23" height="20"><path d="M.7 6.500h3l5-5v17l-5-5h-3zM12 7q2 3 0 6M15 5q4 5 0 10" fill="none" stroke="#fff" stroke-width="1.300"/><path d="M18.500 3q6 7 0 14" fill="none" stroke="#888" stroke-width="1.300"/></svg>
    <svg width="24" height="18"><path d="M9 7h12v9H7v-5z" fill="#fff"/><path d="M6 17.500h16.500v-12H9M22.500 9h1v5h-1M1.500 0v4M5.500 0v4M0 4h7v2q0 3-3.500 3T0 6zM3.500 9v5h3" fill="none" stroke="#fff" stroke-width="1.200"/></svg>
    <svg width="24" height="18"><path d="M6 .7h17.300v12.600H3V7M.6 0h5.500v6H.6zM12.500 13v4M8 17.300h9" fill="none" stroke="#fff" stroke-width="1.300"/></svg>
    <span class="ime">中</span>
    <svg width="24" height="24"><rect width="24" height="24" rx="4" fill="#2f8bff"/><circle cx="12" cy="11.500" r="6" fill="none" stroke="#fff" stroke-width="3"/><path d="M13 14l4 5" stroke="#fff" stroke-width="2"/><circle cx="18.500" cy="18.500" r="1.800" fill="#8f2"/></svg>
    <div class="clock"><div><span data-w="46">17:41</span></div><div><span data-w="94">2021/7/14</span></div></div>
    <svg width="24" height="24"><path d="M0 0h24v14a6 6 0 0 0-9 6l-4 3-4-4H0z" fill="#fff"/><path d="M4 5.500h15M4 9.500h15M4 13.500h10" stroke="#222" stroke-width="1.300"/><path d="M20 13q3 2 3 5t-4 5q-4 0-6-3 5 0 6-2t1-5z" fill="#222" stroke="#fff" stroke-width="1.200"/></svg>
    <div class="peek"></div>
  </div>
</div>
<script src="https://cdn.jsdelivr.net/npm/bootstrap@5.3.0/dist/js/bootstrap.bundle.min.js"></script>
<script>
// Track each run of text so that it fills its measured line width.
document.querySelectorAll('[data-w]').forEach(function (el) {
  var w = +el.dataset.w, r = document.createRange();
  el.style.letterSpacing = '0px';
  r.selectNodeContents(el);
  var n = el.textContent.length;
  el.style.letterSpacing = ((w - r.getBoundingClientRect().width) / n) + 'px';
  if (el.classList.contains('run')) el.style.width = w + 'px';
});
</script>
</body>
</html>
